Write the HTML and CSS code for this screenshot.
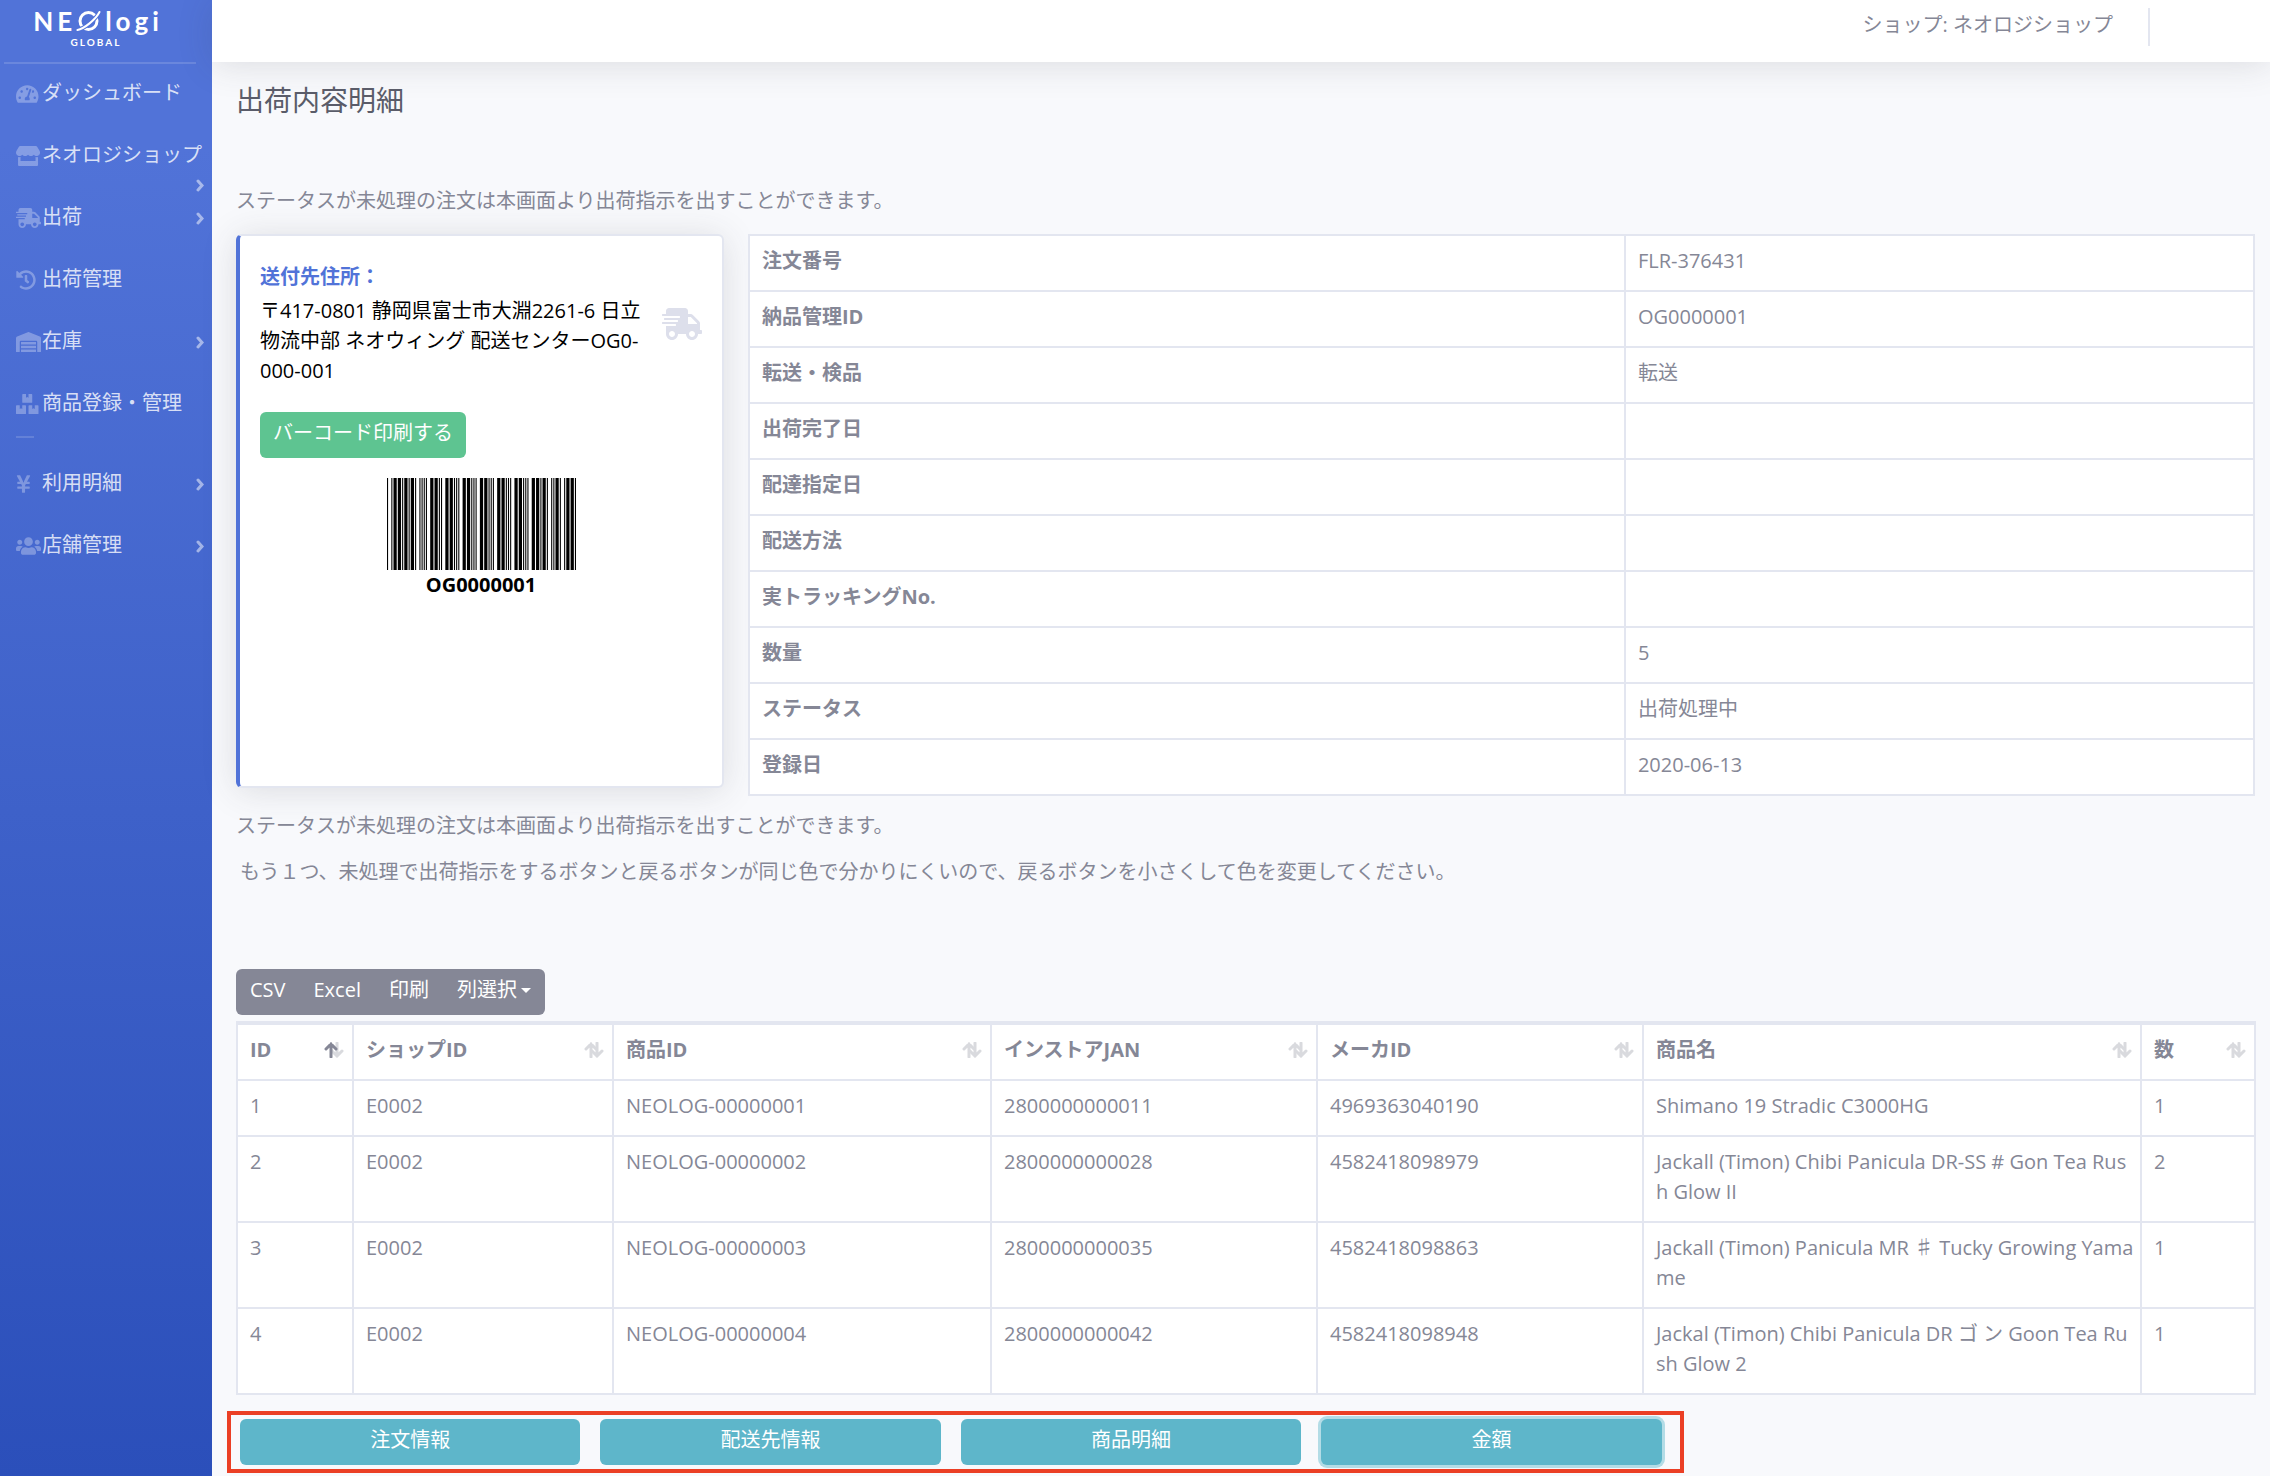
FILE: index.html
```html
<!DOCTYPE html>
<html lang="ja">
<head>
<meta charset="utf-8">
<title>出荷内容明細</title>
<link rel="stylesheet" href="styles.css">
</head>
<body>
<div class="layout">
  <aside class="sidebar">
    <a class="brand" href="#" aria-label="NEOlogi GLOBAL">
      <span class="brand-name">
        <span>N</span><span>E</span>
        <svg class="brand-planet" viewBox="0 0 24 22" aria-hidden="true"><circle cx="12" cy="11" r="8.500" fill="none" stroke="currentColor" stroke-width="3"/><path d="M1 20C7 19 19 10 23 2" fill="none" stroke="#5173d8" stroke-width="4"/><path d="M1 20C7 19 19 10 23 2" fill="none" stroke="currentColor" stroke-width="2" stroke-linecap="round"/></svg>
        <span>l</span><span>o</span><span>g</span><span>i</span>
      </span>
      <span class="brand-sub">GLOBAL</span>
    </a>
    <nav class="nav">
      <a class="nav-link" href="#"><svg class="icon" viewBox="0 0 576 512" preserveAspectRatio="xMinYMid"><path d="M288 32C128.940 32 0 160.940 0 320c0 52.800 14.250 102.260 39.060 144.800 5.610 9.620 16.300 15.200 27.440 15.200h443c11.140 0 21.830-5.580 27.440-15.200C561.750 422.260 576 372.800 576 320c0-159.060-128.940-288-288-288zm0 64c14.710 0 26.580 10.130 30.320 23.650-1.110 2.260-2.640 4.230-3.450 6.670l-9.220 27.670c-5.130 3.490-10.970 6.010-17.640 6.010-17.670 0-32-14.330-32-32S270.330 96 288 96zM96 384c-17.670 0-32-14.330-32-32s14.330-32 32-32 32 14.330 32 32-14.330 32-32 32zm48-160c-17.670 0-32-14.330-32-32s14.330-32 32-32 32 14.330 32 32-14.330 32-32 32zm246.770-72.410l-61.330 184C343.130 347.330 352 364.540 352 384c0 11.720-3.380 22.550-8.880 32H232.880c-5.500-9.450-8.880-20.280-8.880-32 0-33.940 26.500-61.430 59.900-63.590l61.340-184.010c4.170-12.560 17.730-19.450 30.360-15.170 12.570 4.190 19.350 17.790 15.170 30.360zm14.660 57.200l15.520-46.550c3.470-1.290 7.130-2.230 11.050-2.230 17.670 0 32 14.330 32 32s-14.330 32-32 32c-11.380-.010-20.890-6.280-26.570-15.220zM480 384c-17.670 0-32-14.330-32-32s14.330-32 32-32 32 14.330 32 32-14.330 32-32 32z"/></svg><span>ダッシュボード</span></a>
      <a class="nav-link has-more wrapped" href="#"><svg class="icon" viewBox="0 0 616 512" preserveAspectRatio="xMinYMid"><path d="M602 118.600L537.100 15C531.300 5.700 521 0 510 0H106C95 0 84.700 5.700 78.900 15L14 118.600c-33.500 53.500-3.800 127.900 58.800 136.400 4.500.6 9.100.9 13.700.9 29.600 0 55.800-13 73.800-33.100 18 20.100 44.300 33.100 73.800 33.100 29.600 0 55.800-13 73.800-33.100 18 20.100 44.300 33.100 73.800 33.100 29.600 0 55.800-13 73.800-33.100 18.100 20.100 44.300 33.100 73.800 33.100 4.700 0 9.200-.3 13.700-.9 62.800-8.400 92.600-82.800 59-136.400zM529.500 288c-10 0-19.900-1.500-29.500-3.800V384H116v-99.800c-9.600 2.200-19.500 3.800-29.500 3.800-6 0-12.100-.4-18-1.200-5.600-.8-11.100-2.100-16.400-3.600V480c0 17.700 14.300 32 32 32h448c17.700 0 32-14.300 32-32V283.200c-5.400 1.600-10.800 2.900-16.400 3.600-6.100.8-12.100 1.200-18.200 1.200z"/></svg><span>ネオロジショップ</span><svg class="chevron" viewBox="0 0 8 13"><path d="M2 2l4 4.500L2 11"/></svg></a>
      <a class="nav-link has-more" href="#"><svg class="icon" viewBox="0 0 640 512" preserveAspectRatio="xMinYMid"><path id="truck" d="M624 352h-16V243.900c0-12.700-5.100-24.900-14.100-33.900L494 110.100c-9-9-21.200-14.100-33.900-14.100H416V48c0-26.500-21.500-48-48-48H112C85.500 0 64 21.500 64 48v48H8c-4.400 0-8 3.600-8 8v16c0 4.400 3.600 8 8 8h272c4.400 0 8 3.600 8 8v16c0 4.400-3.600 8-8 8H40c-4.400 0-8 3.600-8 8v16c0 4.400 3.600 8 8 8h208c4.400 0 8 3.600 8 8v16c0 4.400-3.600 8-8 8H8c-4.400 0-8 3.600-8 8v16c0 4.400 3.600 8 8 8h208c4.400 0 8 3.600 8 8v16c0 4.400-3.600 8-8 8H64v128c0 53 43 96 96 96s96-43 96-96h128c0 53 43 96 96 96s96-43 96-96h48c8.800 0 16-7.200 16-16v-32c0-8.800-7.200-16-16-16zM160 464c-26.500 0-48-21.500-48-48s21.500-48 48-48 48 21.500 48 48-21.500 48-48 48zm320 0c-26.500 0-48-21.500-48-48s21.500-48 48-48 48 21.500 48 48-21.500 48-48 48zm80-208H416V144h44.100l99.900 99.900V256z"/></svg><span>出荷</span><svg class="chevron" viewBox="0 0 8 13"><path d="M2 2l4 4.500L2 11"/></svg></a>
      <a class="nav-link" href="#"><svg class="icon" viewBox="0 0 512 512" preserveAspectRatio="xMinYMid"><path d="M504 255.531c.253 136.640-111.180 248.372-247.820 248.468-59.015.042-113.223-20.530-155.822-54.911-11.077-8.940-11.905-25.541-1.839-35.607l11.267-11.267c8.609-8.609 22.353-9.551 31.891-1.984C173.062 425.135 212.781 440 256 440c101.705 0 184-82.311 184-184 0-101.705-82.311-184-184-184-48.814 0-93.149 18.969-126.068 49.932l50.754 50.754c10.080 10.080 2.941 27.314-11.313 27.314H24c-8.837 0-16-7.163-16-16V38.627c0-14.254 17.234-21.393 27.314-11.314l49.372 49.372C129.209 34.136 189.552 8 256 8c136.810 0 247.747 110.780 248 247.531zm-180.912 78.784l9.823-12.630c8.138-10.463 6.253-25.542-4.210-33.679L288 256.349V152c0-13.255-10.745-24-24-24h-16c-13.255 0-24 10.745-24 24v135.651l65.409 50.874c10.463 8.137 25.541 6.253 33.679-4.210z"/></svg><span>出荷管理</span></a>
      <a class="nav-link has-more" href="#"><svg class="icon" viewBox="0 0 640 512" preserveAspectRatio="xMinYMid"><path d="M504 352H136.400c-4.400 0-8 3.600-8 8l-.1 48c0 4.400 3.600 8 8 8H504c4.400 0 8-3.600 8-8v-48c0-4.400-3.600-8-8-8zm0 96H136.100c-4.400 0-8 3.600-8 8l-.1 48c0 4.400 3.600 8 8 8h368c4.400 0 8-3.600 8-8v-48c0-4.400-3.600-8-8-8zm0-192H136.600c-4.400 0-8 3.600-8 8l-.1 48c0 4.400 3.600 8 8 8H504c4.400 0 8-3.600 8-8v-48c0-4.400-3.600-8-8-8zm106.500-139L338.400 3.700a48.150 48.150 0 0 0-36.900 0L29.500 117C11.700 124.500 0 141.900 0 161.300V504c0 4.400 3.600 8 8 8h80c4.400 0 8-3.600 8-8V256c0-17.600 14.600-32 32.600-32h382.800c18 0 32.600 14.400 32.600 32v248c0 4.400 3.600 8 8 8h80c4.400 0 8-3.600 8-8V161.300c0-19.400-11.700-36.800-29.500-44.300z"/></svg><span>在庫</span><svg class="chevron" viewBox="0 0 8 13"><path d="M2 2l4 4.500L2 11"/></svg></a>
      <a class="nav-link" href="#"><svg class="icon" viewBox="0 0 576 512" preserveAspectRatio="xMinYMid"><path d="M560 288h-80v96l-32-21.300-32 21.300v-96h-80c-8.800 0-16 7.200-16 16v192c0 8.800 7.200 16 16 16h224c8.800 0 16-7.200 16-16V304c0-8.800-7.200-16-16-16zm-384-64h224c8.800 0 16-7.200 16-16V16c0-8.800-7.200-16-16-16h-80v96l-32-21.300L256 96V0h-80c-8.800 0-16 7.200-16 16v192c0 8.800 7.200 16 16 16zm64 64h-80v96l-32-21.300L96 384v-96H16c-8.800 0-16 7.200-16 16v192c0 8.800 7.200 16 16 16h224c8.800 0 16-7.200 16-16V304c0-8.800-7.200-16-16-16z"/></svg><span>商品登録・管理</span></a>
      <hr class="nav-rule">
      <a class="nav-link has-more" href="#"><svg class="icon" viewBox="0 0 384 512" preserveAspectRatio="xMinYMid"><path d="M351.200 32h-65.300c-4.600 0-8.800 2.600-10.800 6.700l-55.400 113.200c-14.500 34.700-27.100 71.900-27.100 71.900h-1.300s-12.600-37.200-27.100-71.900L108.800 38.700c-2-4.100-6.200-6.700-10.800-6.700H32.800c-9.100 0-14.800 9.700-10.600 17.600L102.300 200H44c-6.600 0-12 5.400-12 12v32c0 6.600 5.400 12 12 12h88.200l19.800 37.200V320H44c-6.600 0-12 5.400-12 12v32c0 6.600 5.400 12 12 12h108v92c0 6.600 5.400 12 12 12h56c6.600 0 12-5.400 12-12v-92h108c6.600 0 12-5.400 12-12v-32c0-6.600-5.400-12-12-12H232v-26.800l19.800-37.200H340c6.600 0 12-5.400 12-12v-32c0-6.600-5.400-12-12-12h-58.300l80.100-150.400c4.200-7.900-1.500-17.600-10.600-17.600z"/></svg><span>利用明細</span><svg class="chevron" viewBox="0 0 8 13"><path d="M2 2l4 4.500L2 11"/></svg></a>
      <a class="nav-link has-more" href="#"><svg class="icon" viewBox="0 0 640 512" preserveAspectRatio="xMinYMid"><path d="M96 224c35.300 0 64-28.700 64-64s-28.700-64-64-64-64 28.700-64 64 28.700 64 64 64zm448 0c35.300 0 64-28.700 64-64s-28.700-64-64-64-64 28.700-64 64 28.700 64 64 64zm32 32h-64c-17.600 0-33.500 7.100-45.100 18.600 40.300 22.100 68.900 62 75.100 109.400h66c17.700 0 32-14.300 32-32v-32c0-35.300-28.700-64-64-64zm-256 0c61.900 0 112-50.100 112-112S381.900 32 320 32 208 82.100 208 144s50.100 112 112 112zm76.800 32h-8.300c-20.800 10-43.900 16-68.500 16s-47.600-6-68.500-16h-8.300C179.600 288 128 339.600 128 403.200V432c0 26.500 21.500 48 48 48h288c26.500 0 48-21.500 48-48v-28.800c0-63.600-51.600-115.200-115.200-115.200zm-223.700-13.400C161.500 263.100 145.600 256 128 256H64c-35.300 0-64 28.700-64 64v32c0 17.700 14.300 32 32 32h65.900c6.300-47.400 34.900-87.300 75.200-109.400z"/></svg><span>店舗管理</span><svg class="chevron" viewBox="0 0 8 13"><path d="M2 2l4 4.500L2 11"/></svg></a>
    </nav>
  </aside>

  <div class="page">
    <header class="topbar"><span class="shop-name">ショップ: ネオロジショップ</span></header>
    <main class="content">
      <h1 class="title">出荷内容明細</h1>
      <p class="note">ステータスが未処理の注文は本画面より出荷指示を出すことができます。</p>

      <div class="overview">
        <section class="card">
          <div class="address">
            <div>
              <h2 class="card-title">送付先住所：</h2>
              <p class="address-text">〒417-0801 静岡県富士市大淵2261-6 日立<br>物流中部 ネオウィング 配送センターOG0-<br>000-001</p>
            </div>
            <svg class="truck" viewBox="0 0 640 512"><use href="#truck"/></svg>
          </div>
          <button class="btn btn-success" type="button">バーコード印刷する</button>
          <figure class="barcode">
            <svg viewBox="0 0 175 92" preserveAspectRatio="none" aria-hidden="true"><path d="M0 46H175" stroke="#000" stroke-width="92" stroke-dasharray="1 3 1 1 3 1 3 1 1 1 3 1 1 1 3 1 1 3 1 1 1 1 1 1 1 3 3 1 3 1 1 1 1 3 3 1 3 1 1 1 1 1 1 3 3 1 3 1 1 1 1 1 1 3 3 1 3 1 1 1 1 1 1 3 3 1 3 1 1 1 1 1 1 3 3 1 3 1 1 1 1 1 1 3 3 1 3 1 1 1 3 1 1 3 1 1 1 1 3 1 1 3 1 1 3 1 3 1 1 1"/></svg>
            <figcaption>OG0000001</figcaption>
          </figure>
        </section>

        <table class="table detail">
          <colgroup><col class="w-label"><col></colgroup>
          <tbody>
            <tr><th scope="row">注文番号</th><td>FLR-376431</td></tr>
            <tr><th scope="row">納品管理ID</th><td>OG0000001</td></tr>
            <tr><th scope="row">転送・検品</th><td>転送</td></tr>
            <tr><th scope="row">出荷完了日</th><td></td></tr>
            <tr><th scope="row">配達指定日</th><td></td></tr>
            <tr><th scope="row">配送方法</th><td></td></tr>
            <tr><th scope="row">実トラッキングNo.</th><td></td></tr>
            <tr><th scope="row">数量</th><td>5</td></tr>
            <tr><th scope="row">ステータス</th><td>出荷処理中</td></tr>
            <tr><th scope="row">登録日</th><td>2020-06-13</td></tr>
          </tbody>
        </table>
      </div>

      <p class="note">ステータスが未処理の注文は本画面より出荷指示を出すことができます。</p>
      <p class="note indented">もう１つ、未処理で出荷指示をするボタンと戻るボタンが同じ色で分かりにくいので、戻るボタンを小さくして色を変更してください。</p>

      <div class="toolbar">
        <button class="tool" type="button">CSV</button>
        <button class="tool" type="button">Excel</button>
        <button class="tool" type="button">印刷</button>
        <button class="tool" type="button">列選択<span class="caret"></span></button>
      </div>

      <table class="table items">
        <colgroup><col class="w-id"><col class="w-shop"><col class="w-product"><col class="w-code"><col class="w-code"><col class="w-name"><col class="w-count"></colgroup>
        <thead>
          <tr>
            <th scope="col"><span class="sort">ID<svg viewBox="0 0 20 16"><path d="M8 9l5 5 5-5M13 14V1"/><path class="on" d="M2 7l5-5 5 5M7 2v13"/></svg></span></th>
            <th scope="col"><span class="sort">ショップID<svg viewBox="0 0 20 16"><path d="M2 7l5-5 5 5M7 2v13"/><path d="M8 9l5 5 5-5M13 14V1"/></svg></span></th>
            <th scope="col"><span class="sort">商品ID<svg viewBox="0 0 20 16"><path d="M2 7l5-5 5 5M7 2v13"/><path d="M8 9l5 5 5-5M13 14V1"/></svg></span></th>
            <th scope="col"><span class="sort">インストアJAN<svg viewBox="0 0 20 16"><path d="M2 7l5-5 5 5M7 2v13"/><path d="M8 9l5 5 5-5M13 14V1"/></svg></span></th>
            <th scope="col"><span class="sort">メーカID<svg viewBox="0 0 20 16"><path d="M2 7l5-5 5 5M7 2v13"/><path d="M8 9l5 5 5-5M13 14V1"/></svg></span></th>
            <th scope="col"><span class="sort">商品名<svg viewBox="0 0 20 16"><path d="M2 7l5-5 5 5M7 2v13"/><path d="M8 9l5 5 5-5M13 14V1"/></svg></span></th>
            <th scope="col"><span class="sort">数<svg viewBox="0 0 20 16"><path d="M2 7l5-5 5 5M7 2v13"/><path d="M8 9l5 5 5-5M13 14V1"/></svg></span></th>
          </tr>
        </thead>
        <tbody>
          <tr><td>1</td><td>E0002</td><td>NEOLOG-00000001</td><td>2800000000011</td><td>4969363040190</td><td>Shimano 19 Stradic C3000HG</td><td>1</td></tr>
          <tr><td>2</td><td>E0002</td><td>NEOLOG-00000002</td><td>2800000000028</td><td>4582418098979</td><td>Jackall (Timon) Chibi Panicula DR-SS # Gon Tea Rus<br>h Glow II</td><td>2</td></tr>
          <tr><td>3</td><td>E0002</td><td>NEOLOG-00000003</td><td>2800000000035</td><td>4582418098863</td><td>Jackall (Timon) Panicula MR ♯ Tucky Growing Yama<br>me</td><td>1</td></tr>
          <tr><td>4</td><td>E0002</td><td>NEOLOG-00000004</td><td>2800000000042</td><td>4582418098948</td><td>Jackal (Timon) Chibi Panicula DR ゴ ン Goon Tea Ru<br>sh Glow 2</td><td>1</td></tr>
        </tbody>
      </table>

      <div class="actions">
        <button class="btn btn-info" type="button">注文情報</button>
        <button class="btn btn-info" type="button">配送先情報</button>
        <button class="btn btn-info" type="button">商品明細</button>
        <button class="btn btn-info is-focused" type="button">金額</button>
      </div>
    </main>
  </div>
</div>
</body>
</html>
```
FILE: styles.css
```css
* { box-sizing: border-box; }

body {
  margin: 0;
  background: #f8f9fc;
  color: #858796;
  font: 20px/30px "Open Sans", "Noto Sans CJK JP", sans-serif;
}

h1, h2, p, figure { margin: 0; font-weight: 400; }
button { font: inherit; cursor: pointer; }
a { color: inherit; text-decoration: none; }

.layout { display: grid; grid-template-columns: 212px minmax(0, 1fr); min-height: 100vh; }

/* sidebar */
.sidebar { background: linear-gradient(180deg, #5173d8 10%, #2b4fba 100%); color: #fff; }
.brand {
  display: flex;
  flex-direction: column;
  align-items: center;
  height: 62px;
  margin: 0 16px 0 4px;
  padding: 6px 8px 0 0;
}
.brand-name { display: flex; align-items: center; gap: 4px; font: 700 26px/30px Lato, sans-serif; }
.brand-planet { width: 25px; height: 22px; }
.brand-sub { font: 700 10px/12px Lato, sans-serif; letter-spacing: 2px; }
.nav { display: flex; flex-direction: column; }
.nav::before { content: ""; height: 2px; margin: 0 16px 0 4px; background: rgba(255, 255, 255, .15); }
.nav-link {
  position: relative;
  display: flex;
  align-items: center;
  height: 62px;
  padding: 0 8px 4px 16px;
  color: rgba(255, 255, 255, .8);
  white-space: nowrap;
}
.nav-link span { flex: 1; }
.icon { flex: none; width: 26px; height: 20px; margin-top: 2px; fill: rgba(255, 255, 255, .3); }
.chevron { flex: none; width: 8px; height: 13px; margin-top: 3px; fill: none; stroke: rgba(255, 255, 255, .5); stroke-width: 3; stroke-linecap: round; }
.wrapped .chevron { position: absolute; right: 8px; bottom: -4px; }
.nav-rule { width: 18px; height: 2px; margin: 0 0 16px 16px; border: 0; background: rgba(255, 255, 255, .15); }

/* top bar */
.topbar {
  display: flex;
  justify-content: flex-end;
  height: 62px;
  padding: 8px 120px 0 0;
  background: #fff;
  box-shadow: 0 3px 35px rgba(58, 59, 69, .15);
}
.shop-name { height: 38px; padding: 2px 35px 0 0; border-right: 2px solid #e3e6f0; }

/* content */
.content { padding: 18px 15px 0 24px; }
.title { color: #5a5c69; font-size: 28px; line-height: 40px; }
.title + .note { margin: 66px 0 18px; }
.note + .note { margin-top: 16px; }
.indented { padding-left: 4px; }
.overview { display: grid; grid-template-columns: 488fr 1507fr; gap: 24px; align-items: start; margin-bottom: 15px; }

.card {
  min-height: 554px;
  padding: 26px 20px 20px;
  background: #fff;
  border: 2px solid #e3e6f0;
  border-left: 4px solid #5173d8;
  border-radius: 6px;
  color: #000;
  box-shadow: 0 3px 35px rgba(58, 59, 69, .15);
}
.address { display: flex; align-items: center; justify-content: space-between; margin-bottom: 26px; white-space: nowrap; }
.card-title { margin-bottom: 4px; color: #5173d8; font-size: 20px; font-weight: 700; }
.truck { flex: none; width: 40px; height: 32px; fill: #dddfeb; }
.barcode { display: flex; flex-direction: column; align-items: center; margin-top: 20px; font-weight: 700; }
.barcode svg { width: 189px; height: 92px; }

.btn { height: 46px; padding: 0 13px 4px; border: 0; border-radius: 6px; color: #fff; }
.btn-success { background: #5ec491; }
.btn-info { background: #5eb6ca; }
.is-focused { box-shadow: 0 0 0 3px #b3dce6; }

.table { width: 100%; table-layout: fixed; border-collapse: collapse; background: #fff; border: 2px solid #e3e6f0; }
.table th, .table td { height: 56px; padding: 10px 12px 14px; border: 2px solid #e3e6f0; text-align: left; vertical-align: top; }
.table th { font-weight: 700; }
.w-label { width: 58.2%; }

.toolbar { display: inline-flex; margin: 82px 0 6px; border-radius: 6px; background: #858796; }
.tool { display: flex; align-items: center; height: 46px; padding: 0 14px 4px; border: 0; background: none; color: #fff; }
.caret { margin-left: 4px; border: 5px solid transparent; border-top-color: #fff; border-bottom: 0; }

.items { border-top-width: 4px; }
.items thead th { border-top-width: 4px; }
.items td { white-space: nowrap; }
.w-id { width: 116px; }
.w-shop { width: 260px; }
.w-product { width: 378px; }
.w-code { width: 326px; }
.w-name { width: 498px; }
.w-count { width: 114px; }
.sort { display: flex; align-items: center; justify-content: space-between; margin-right: -4px; }
.sort svg { width: 20px; height: 16px; fill: none; stroke: #d9dade; stroke-width: 3; stroke-linecap: round; }
.sort .on { stroke: #858796; }

.actions {
  display: grid;
  grid-template-columns: repeat(4, 1fr);
  gap: 20px;
  width: calc(72% + 3px);
  margin: 16px 0 0 -9px;
  padding: 4px 18px 4px 9px;
  border: 4px solid #eb3f25;
}
```
